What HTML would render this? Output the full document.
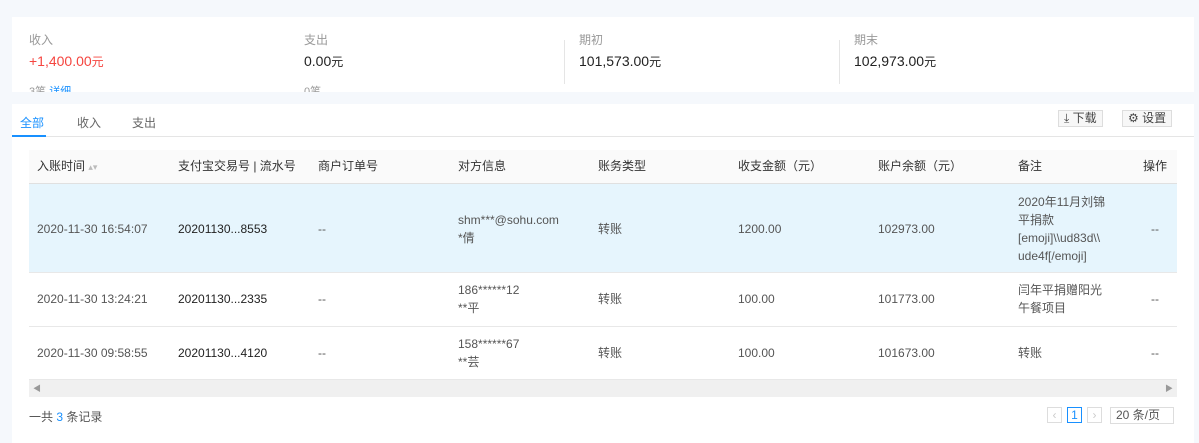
<!DOCTYPE html>
<html><head><meta charset="utf-8"><style>
*{margin:0;padding:0;box-sizing:border-box}
body{width:1199px;height:443px;background:#f5f8fc;font-family:"Liberation Sans","Noto Sans CJK SC",sans-serif;font-size:12px;color:#333;position:relative;overflow:hidden}
.abs{position:absolute;white-space:nowrap}
.card1{position:absolute;left:12px;top:17px;width:1182px;height:75px;background:#fff;overflow:hidden}
.card2{position:absolute;left:12px;top:104px;width:1182px;height:339px;background:#fff}
.lbl{color:#999;font-size:12px}
.val{font-size:14px;color:#222}
.div{position:absolute;width:1px;background:#e5e5e5;top:23px;height:44px}
.th{position:absolute;top:0;line-height:33px;color:#333;font-size:12px}
.row{position:absolute;left:17px;width:1148px;border-bottom:1px solid #e8e8e8}
.c{position:absolute;color:#555;font-size:12px;line-height:18px}
.btn{position:absolute;top:6px;height:17px;border:1px solid #ddd;background:#f7f7f7;font-size:12px;color:#444;line-height:15px;padding:0 5px}
</style></head><body>
<div class="card1">
 <div class="abs lbl" style="left:17px;top:14px">收入</div>
 <div class="abs val" style="left:17px;top:36px;color:#f5453f">+1,400.00<span style="font-size:12px">元</span></div>
 <div class="abs lbl" style="left:17px;top:66px;font-size:11px">3笔 <span style="color:#1890ff">详细</span></div>
 <div class="abs lbl" style="left:292px;top:14px">支出</div>
 <div class="abs val" style="left:292px;top:36px">0.00<span style="font-size:12px">元</span></div>
 <div class="abs lbl" style="left:292px;top:66px;font-size:11px">0笔</div>
 <div class="div" style="left:552px"></div>
 <div class="abs lbl" style="left:567px;top:14px">期初</div>
 <div class="abs val" style="left:567px;top:36px">101,573.00<span style="font-size:12px">元</span></div>
 <div class="div" style="left:827px"></div>
 <div class="abs lbl" style="left:842px;top:14px">期末</div>
 <div class="abs val" style="left:842px;top:36px">102,973.00<span style="font-size:12px">元</span></div>
</div>
<div class="card2">
 <div class="abs" style="left:8px;top:10px;color:#1890ff;font-size:12px">全部</div>
 <div class="abs" style="left:65px;top:10px;color:#666">收入</div>
 <div class="abs" style="left:120px;top:10px;color:#666">支出</div>
 <div class="abs" style="left:0;top:32px;width:1182px;height:1px;background:#e5e5e5"></div>
 <div class="abs" style="left:0;top:31px;width:34px;height:2px;background:#1890ff"></div>
 <div class="btn" style="left:1046px">⤓ 下载</div>
 <div class="btn" style="left:1110px">⚙ 设置</div>
 <div class="row" style="top:46px;height:34px;background:#fafafa;border-bottom:1px solid #e0e0e0">
  <div class="th" style="left:8px">入账时间 <span style="color:#bbb;font-size:9px">▴▾</span></div>
  <div class="th" style="left:149px">支付宝交易号 | 流水号</div>
  <div class="th" style="left:289px">商户订单号</div>
  <div class="th" style="left:429px">对方信息</div>
  <div class="th" style="left:569px">账务类型</div>
  <div class="th" style="left:709px">收支金额（元）</div>
  <div class="th" style="left:849px">账户余额（元）</div>
  <div class="th" style="left:989px">备注</div>
  <div class="th" style="left:1114px">操作</div>
 </div>
 <div class="row" style="top:80px;height:89px;background:#e6f5fd">
  <div class="c" style="left:8px;top:36px">2020-11-30 16:54:07</div>
  <div class="c" style="left:149px;top:36px;color:#222">20201130...8553</div>
  <div class="c" style="left:289px;top:36px">--</div>
  <div class="c" style="left:429px;top:27px">shm***@sohu.com<br>*倩</div>
  <div class="c" style="left:569px;top:36px">转账</div>
  <div class="c" style="left:709px;top:36px">1200.00</div>
  <div class="c" style="left:849px;top:36px">102973.00</div>
  <div class="c" style="left:989px;top:9px">2020年11月刘锦<br>平捐款<br>[emoji]\\ud83d\\<br>ude4f[/emoji]</div>
  <div class="c" style="left:1122px;top:36px">--</div>
 </div>
 <div class="row" style="top:169px;height:54px">
  <div class="c" style="left:8px;top:17px">2020-11-30 13:24:21</div>
  <div class="c" style="left:149px;top:17px;color:#222">20201130...2335</div>
  <div class="c" style="left:289px;top:17px">--</div>
  <div class="c" style="left:429px;top:8px">186******12<br>**平</div>
  <div class="c" style="left:569px;top:17px">转账</div>
  <div class="c" style="left:709px;top:17px">100.00</div>
  <div class="c" style="left:849px;top:17px">101773.00</div>
  <div class="c" style="left:989px;top:8px">闫年平捐赠阳光<br>午餐项目</div>
  <div class="c" style="left:1122px;top:17px">--</div>
 </div>
 <div class="row" style="top:223px;height:53px">
  <div class="c" style="left:8px;top:17px">2020-11-30 09:58:55</div>
  <div class="c" style="left:149px;top:17px;color:#222">20201130...4120</div>
  <div class="c" style="left:289px;top:17px">--</div>
  <div class="c" style="left:429px;top:8px">158******67<br>**芸</div>
  <div class="c" style="left:569px;top:17px">转账</div>
  <div class="c" style="left:709px;top:17px">100.00</div>
  <div class="c" style="left:849px;top:17px">101673.00</div>
  <div class="c" style="left:989px;top:17px">转账</div>
  <div class="c" style="left:1122px;top:17px">--</div>
 </div>
 <div class="abs" style="left:17px;top:276px;width:1148px;height:17px;background:#f0f0f0;color:#999;font-size:8px;line-height:17px"><span style="margin-left:4px">◀</span><span style="position:absolute;right:4px">▶</span></div>
 <div class="abs" style="left:17px;top:304px;color:#555">一共 <span style="color:#1890ff">3</span> 条记录</div>
 <div class="abs" style="left:1035px;top:303px;width:15px;height:16px;border:1px solid #ddd;color:#ccc;text-align:center;line-height:14px">‹</div>
 <div class="abs" style="left:1055px;top:303px;width:15px;height:16px;border:1px solid #1890ff;color:#1890ff;text-align:center;line-height:14px">1</div>
 <div class="abs" style="left:1075px;top:303px;width:15px;height:16px;border:1px solid #ddd;color:#ccc;text-align:center;line-height:14px">›</div>
 <div class="abs" style="left:1098px;top:303px;width:64px;height:17px;border:1px solid #ddd;color:#555;line-height:15px;padding-left:5px">20 条/页</div>
</div>
</body></html>
